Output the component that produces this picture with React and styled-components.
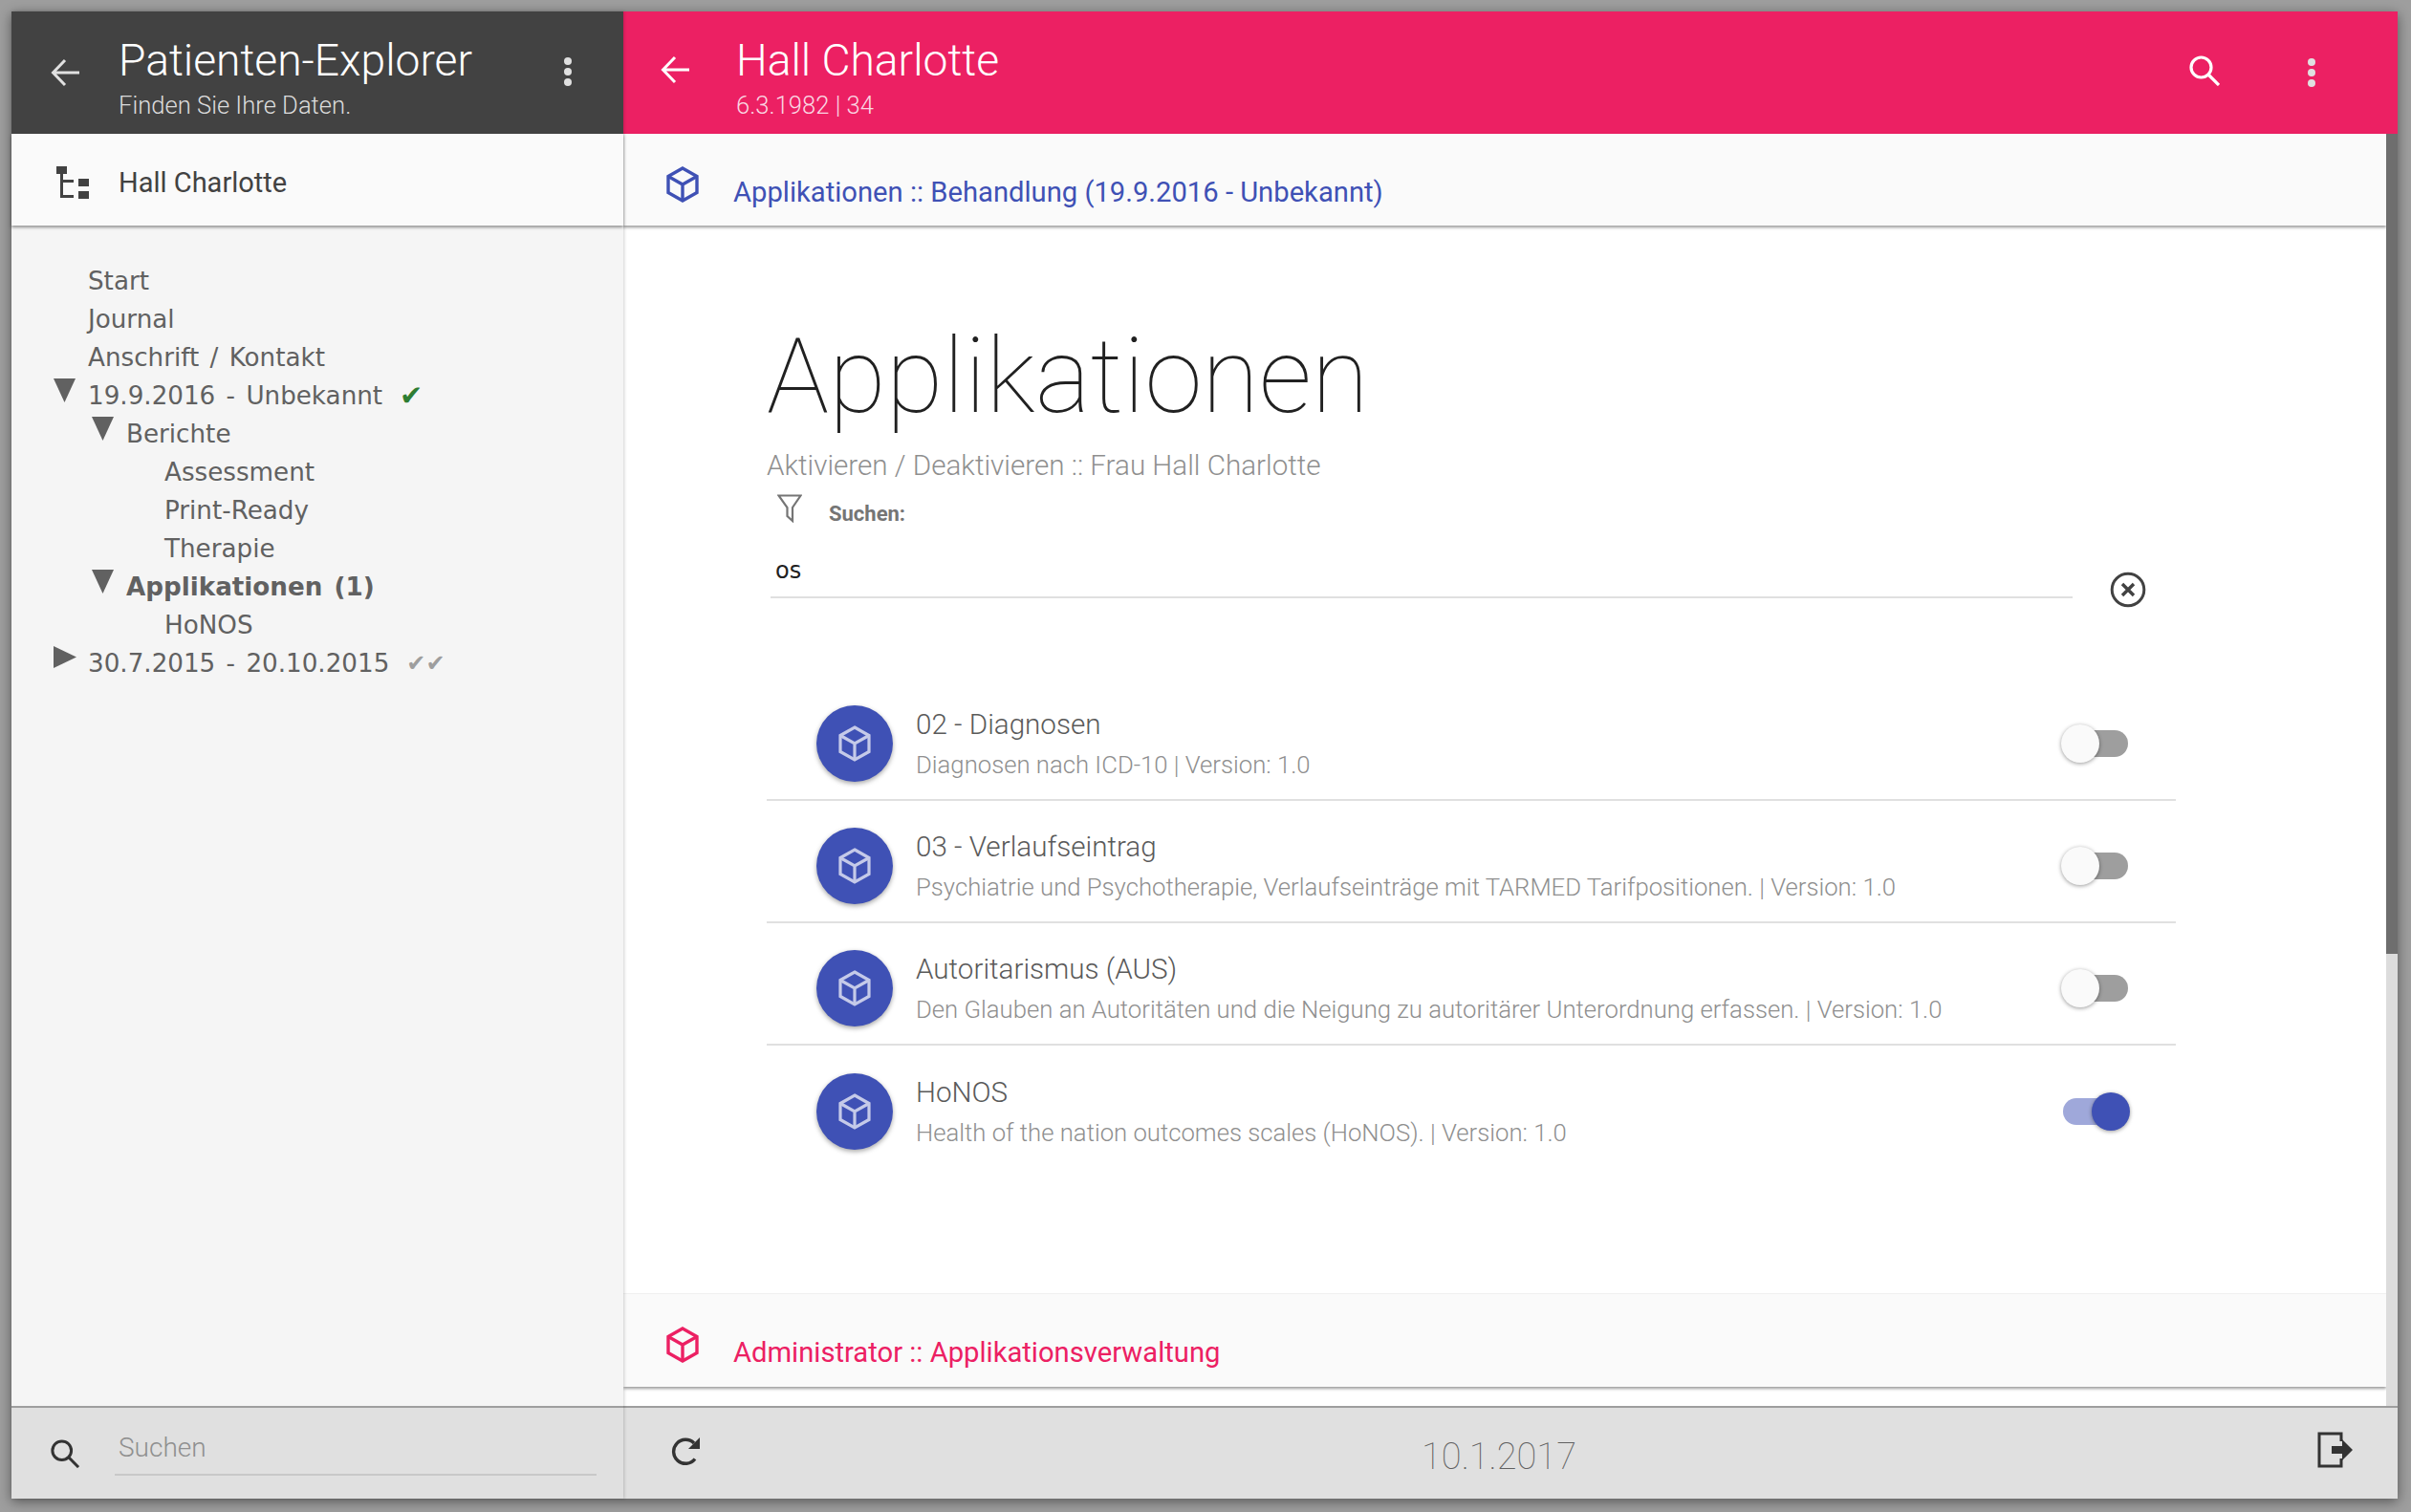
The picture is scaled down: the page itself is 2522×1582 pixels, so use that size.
import styled, { createGlobalStyle } from "styled-components";

const GlobalStyle = createGlobalStyle`
    html, body {
        margin: 0;
        padding: 0;
        height: 100%;
        background: #9e9e9e;
        overflow: hidden;
    }
    * {
        box-sizing: border-box;
    }
`;

const SANS = `"Roboto", "Liberation Sans", sans-serif`;
const TREE = `"DejaVu Sans", sans-serif`;

const treeRows = [
    { level: 0, label: "Start" },
    { level: 0, label: "Journal" },
    { level: 0, label: "Anschrift / Kontakt" },
    { level: 0, label: "19.9.2016 - Unbekannt", arrow: "down", check: "single" },
    { level: 1, label: "Berichte", arrow: "down" },
    { level: 2, label: "Assessment" },
    { level: 2, label: "Print-Ready" },
    { level: 2, label: "Therapie" },
    { level: 1, label: "Applikationen (1)", arrow: "down", bold: true },
    { level: 2, label: "HoNOS" },
    { level: 0, label: "30.7.2015 - 20.10.2015", arrow: "right", check: "double" },
];

const apps = [
    { title: "02 - Diagnosen", text: "Diagnosen nach ICD-10 | Version: 1.0", active: false },
    {
        title: "03 - Verlaufseintrag",
        text: "Psychiatrie und Psychotherapie, Verlaufseinträge mit TARMED Tarifpositionen. | Version: 1.0",
        active: false,
    },
    {
        title: "Autoritarismus (AUS)",
        text: "Den Glauben an Autoritäten und die Neigung zu autoritärer Unterordnung erfassen. | Version: 1.0",
        active: false,
    },
    { title: "HoNOS", text: "Health of the nation outcomes scales (HoNOS). | Version: 1.0", active: true },
];

const BackIcon = ({ color }) => (
    <svg width="30" height="30" viewBox="0 0 30 30" fill="none" stroke={color} strokeWidth="3">
        <path d="M30 15H3M15 2 2.5 15 15 28" />
    </svg>
);

const DotsIcon = ({ color }) => (
    <svg width="10" height="30" viewBox="0 0 10 30" fill={color}>
        <circle cx="5" cy="4" r="4" />
        <circle cx="5" cy="15" r="4" />
        <circle cx="5" cy="26" r="4" />
    </svg>
);

const SearchIcon = ({ color, size = 32 }) => (
    <svg width={size} height={size} viewBox="0 0 32 32" fill="none" stroke={color} strokeWidth="3.2">
        <circle cx="12.5" cy="12.5" r="10.5" />
        <path d="M20 20 31 31" />
    </svg>
);

const CubeIcon = ({ color, stroke = 3.4 }) => (
    <svg width="34" height="38" viewBox="0 0 34 38" fill="none" stroke={color} strokeWidth={stroke}>
        <path d="M17 2 32 10.5V27.5L17 36 2 27.5V10.5Z" />
        <path d="M2 10.5 17 19 32 10.5M17 19V36" />
    </svg>
);

const TreeIcon = () => (
    <svg width="34" height="34" viewBox="0 0 34 34" fill="#424242">
        <rect x="0" y="0" width="11" height="8" />
        <rect x="4" y="8" width="3" height="25" />
        <rect x="4" y="14" width="14" height="3" />
        <rect x="4" y="30" width="14" height="3" />
        <rect x="23" y="13" width="11" height="8" />
        <rect x="23" y="26" width="11" height="8" />
    </svg>
);

const FilterIcon = () => (
    <svg width="26" height="30" viewBox="0 0 26 30" fill="none" stroke="#757575" strokeWidth="2.2">
        <path d="M1.5 1.5H24.5L16 14V28L10.5 23V14Z" />
    </svg>
);

const ClearIcon = () => (
    <svg width="38" height="38" viewBox="0 0 38 38" fill="none" stroke="#424242">
        <circle cx="19" cy="19" r="16.8" strokeWidth="3" />
        <path d="M13 13 25 25M25 13 13 25" strokeWidth="3.4" />
    </svg>
);

const RefreshIcon = () => (
    <svg width="32" height="32" viewBox="0 0 32 32" fill="none">
        <path d="M25 23.5A12.5 12.5 0 1 1 24 7" stroke="#333" strokeWidth="3.4" />
        <path d="M30 1V13H18Z" fill="#333" />
    </svg>
);

const LogoutIcon = () => (
    <svg width="38" height="38" viewBox="0 0 38 38" fill="none">
        <path d="M25 10V2H2V36H25V28" stroke="#333" strokeWidth="3" />
        <path d="M15 15H26V8L37 19 26 30V23H15Z" fill="#333" />
    </svg>
);

const Arrow = ({ dir }) =>
    dir === "down" ? (
        <svg width="23" height="25" viewBox="0 0 23 25" fill="#616161">
            <path d="M0 0H23L11.5 25Z" />
        </svg>
    ) : (
        <svg width="24" height="23" viewBox="0 0 24 23" fill="#616161">
            <path d="M0 0 24 11.5 0 23Z" />
        </svg>
    );

const Toggle = ({ on }) => (
    <ToggleTrack $on={on}>
        <ToggleThumb $on={on} />
    </ToggleTrack>
);

export default function App() {
    return (
        <>
            <GlobalStyle />
            <Page>
                <AppWindow>
                    <Sidebar>
                        <HeaderBar $bg="#424242">
                            <IconSlot>
                                <BackIcon color="#e0e0e0" />
                            </IconSlot>
                            <HeaderText>
                                <HeaderTitle>Patienten-Explorer</HeaderTitle>
                                <HeaderSub $color="#dcdcdc">Finden Sie Ihre Daten.</HeaderSub>
                            </HeaderText>
                            <IconSlot $width={116} $pad="0 0 3px">
                                <DotsIcon color="#e0e0e0" />
                            </IconSlot>
                        </HeaderBar>
                        <PatientBar>
                            <IconSlot $pad="6px 0 0 16px">
                                <TreeIcon />
                            </IconSlot>
                            <PatientName>Hall Charlotte</PatientName>
                        </PatientBar>
                        <Tree>
                            {treeRows.map((row) => (
                                <TreeRow key={row.label} $level={row.level} $bold={row.bold}>
                                    <ArrowSlot>{row.arrow && <Arrow dir={row.arrow} />}</ArrowSlot>
                                    {row.label}
                                    {row.check === "single" && (
                                        <Check $color="#2e7d32" $size={29}>
                                            ✔
                                        </Check>
                                    )}
                                    {row.check === "double" && (
                                        <Check $color="#9e9e9e" $size={24}>
                                            ✔✔
                                        </Check>
                                    )}
                                </TreeRow>
                            ))}
                        </Tree>
                        <FooterBar>
                            <IconSlot>
                                <SearchIcon color="#333" size={30} />
                            </IconSlot>
                            <SearchField>Suchen</SearchField>
                        </FooterBar>
                    </Sidebar>

                    <Main>
                        <HeaderBar $bg="#ec2063">
                            <IconSlot $width={118} $pad="0 10px 6px 0">
                                <BackIcon color="#ffffff" />
                            </IconSlot>
                            <HeaderText>
                                <HeaderTitle>Hall Charlotte</HeaderTitle>
                                <HeaderSub $color="#fad7e2">6.3.1982 | 34</HeaderSub>
                            </HeaderText>
                            <IconSlot $width={44} $pad="0 0 4px">
                                <SearchIcon color="#ffffff" />
                            </IconSlot>
                            <IconSlot $width={180}>
                                <DotsIcon color="#e0e0e0" />
                            </IconSlot>
                        </HeaderBar>
                        <MainBody>
                            <Column>
                                <SectionBar>
                                    <CubeIcon color="#3f51b5" />
                                    <SectionTitle $color="#3f51b5">
                                        Applikationen :: Behandlung (19.9.2016 - Unbekannt)
                                    </SectionTitle>
                                </SectionBar>
                                <Content>
                                    <PageTitle>Applikationen</PageTitle>
                                    <PageSub>Aktivieren / Deaktivieren :: Frau Hall Charlotte</PageSub>
                                    <FilterRow>
                                        <FilterIcon />
                                        <FilterLabel>Suchen:</FilterLabel>
                                    </FilterRow>
                                    <InputRow>
                                        <InputValue>os</InputValue>
                                        <ClearIcon />
                                    </InputRow>
                                    <AppList>
                                        {apps.map((app) => (
                                            <AppRow key={app.title}>
                                                <Avatar>
                                                    <CubeIcon color="#c5cae9" stroke={3.2} />
                                                </Avatar>
                                                <AppText>
                                                    <AppTitle>{app.title}</AppTitle>
                                                    <AppInfo>{app.text}</AppInfo>
                                                </AppText>
                                                <Toggle on={app.active} />
                                            </AppRow>
                                        ))}
                                    </AppList>
                                </Content>
                                <AdminBar>
                                    <CubeIcon color="#ec2063" />
                                    <SectionTitle $color="#ec2063">Administrator :: Applikationsverwaltung</SectionTitle>
                                </AdminBar>
                                <AdminGap />
                            </Column>
                            <Scrollbar>
                                <ScrollThumb />
                            </Scrollbar>
                        </MainBody>
                        <MainFooter>
                            <RefreshSlot>
                                <RefreshIcon />
                            </RefreshSlot>
                            <DateText>10.1.2017</DateText>
                            <LogoutSlot>
                                <LogoutIcon />
                            </LogoutSlot>
                        </MainFooter>
                    </Main>
                </AppWindow>
            </Page>
        </>
    );
}

const Page = styled.div`
    height: 100vh;
    padding: 12px 14px 14px 12px;
    background: #9e9e9e;
`;

const AppWindow = styled.div`
    display: flex;
    width: 100%;
    height: 100%;
    background: #fff;
    box-shadow: 0 3px 12px rgba(0, 0, 0, 0.45);
`;

const Sidebar = styled.div`
    position: relative;
    z-index: 2;
    display: flex;
    flex-direction: column;
    flex: 0 0 640px;
    background: #f5f5f5;
    box-shadow: 1px 0 3px rgba(0, 0, 0, 0.18);
`;

const Main = styled.div`
    display: flex;
    flex-direction: column;
    flex: 1;
    min-width: 0;
`;

const HeaderBar = styled.div`
    display: flex;
    align-items: center;
    flex: 0 0 128px;
    background: ${(p) => p.$bg};
`;

const IconSlot = styled.div`
    display: flex;
    align-items: center;
    justify-content: center;
    flex: 0 0 ${(p) => p.$width || 112}px;
    padding: ${(p) => p.$pad || 0};
`;

const HeaderText = styled.div`
    display: flex;
    flex-direction: column;
    flex: 1;
    min-width: 0;
`;

const HeaderTitle = styled.div`
    font: 300 46.2px/52px ${SANS};
    color: #fff;
    margin-top: 10px;
`;

const HeaderSub = styled.div`
    font: 300 25.6px/30px ${SANS};
    color: ${(p) => p.$color};
    margin-top: 6px;
`;

const PatientBar = styled.div`
    position: relative;
    display: flex;
    align-items: center;
    flex: 0 0 96px;
    background: #fafafa;
    box-shadow: 0 2px 3px rgba(0, 0, 0, 0.4);
`;

const PatientName = styled.div`
    margin-top: 6px;
    font: 400 29px/34px ${SANS};
    color: #424242;
`;

const Tree = styled.div`
    flex: 1;
    padding-top: 38px;
`;

const TreeRow = styled.div`
    display: flex;
    align-items: center;
    height: 40px;
    padding-left: ${(p) => 44 + p.$level * 40}px;
    font: ${(p) => (p.$bold ? 700 : 400)} 26.2px/40px ${TREE};
    word-spacing: 3px;
    color: #616161;
    white-space: pre;
`;

const ArrowSlot = styled.div`
    display: flex;
    align-self: flex-start;
    flex: 0 0 36px;
    padding-top: 2px;
`;

const Check = styled.span`
    margin-left: 18px;
    font-size: ${(p) => p.$size}px;
    font-style: italic;
    color: ${(p) => p.$color};
`;

const FooterBar = styled.div`
    display: flex;
    align-items: center;
    flex: 0 0 97px;
    background: #e0e0e0;
    border-top: 2px solid #9e9e9e;
`;

const SearchField = styled.div`
    width: 504px;
    margin-left: -4px;
    padding: 0 0 10px 4px;
    border-bottom: 2px solid #c8c8c8;
    font: 300 28px/34px ${SANS};
    color: #8f8f8f;
`;

const MainBody = styled.div`
    display: flex;
    flex: 1;
    min-height: 0;
`;

const Column = styled.div`
    display: flex;
    flex-direction: column;
    flex: 1;
    min-width: 0;
`;

const SectionBar = styled.div`
    display: flex;
    align-items: center;
    flex: 0 0 96px;
    padding-left: 45px;
    background: #fafafa;
    box-shadow: 0 2px 3px rgba(0, 0, 0, 0.4);
    & > svg {
        margin-top: 10px;
    }
`;

const AdminBar = styled(SectionBar)`
    flex-basis: 97px;
    box-shadow: 0 -1px 0 #f0f0f0, 0 2px 3px rgba(0, 0, 0, 0.4);
    & > svg {
        margin-top: 8px;
    }
`;

const AdminGap = styled.div`
    flex: 0 0 20px;
`;

const SectionTitle = styled.div`
    margin: 25px 0 0 36px;
    font: 400 29.2px/34px ${SANS};
    color: ${(p) => p.$color};
`;

const Content = styled.div`
    display: flex;
    flex-direction: column;
    flex: 1;
    min-height: 0;
    padding: 95px 220px 0 150px;
`;

const PageTitle = styled.div`
    font: 100 109px/126px ${SANS};
    color: #212121;
`;

const PageSub = styled.div`
    margin-top: 12px;
    font: 300 29.6px/36px ${SANS};
    color: #8f8f8f;
`;

const FilterRow = styled.div`
    display: flex;
    align-items: flex-start;
    gap: 28px;
    margin-top: 12px;
    padding-left: 11px;
`;

const FilterLabel = styled.div`
    margin-top: 6px;
    font: 700 22px/30px ${SANS};
    color: #757575;
`;

const InputRow = styled.div`
    display: flex;
    align-items: flex-end;
    gap: 39px;
    margin-top: 27px;
    padding: 0 31px 0 4px;
    & > svg {
        margin-bottom: -10px;
    }
`;

const InputValue = styled.div`
    flex: 1;
    padding: 0 0 10px 5px;
    border-bottom: 2px solid #e0e0e0;
    font: 400 24px/34px ${TREE};
    color: #212121;
`;

const AppList = styled.div`
    display: flex;
    flex-direction: column;
    margin-top: 84px;
`;

const AppRow = styled.div`
    display: flex;
    align-items: center;
    height: 128px;
    padding: 10px 50px 0 52px;
    border-bottom: 2px solid #e0e0e0;
    &:last-child {
        border-bottom: none;
    }
`;

const Avatar = styled.div`
    display: flex;
    align-items: center;
    justify-content: center;
    flex: 0 0 80px;
    height: 80px;
    border-radius: 50%;
    background: #3f51b5;
    box-shadow: 0 2px 5px rgba(0, 0, 0, 0.35);
`;

const AppText = styled.div`
    flex: 1;
    min-width: 0;
    margin: -2px 0 0 24px;
`;

const AppTitle = styled.div`
    font: 300 29.6px/38px ${SANS};
    color: #5a5a5a;
`;

const AppInfo = styled.div`
    margin-top: 7px;
    font: 300 25.7px/32px ${SANS};
    color: #8f8f8f;
`;

const ToggleTrack = styled.div`
    position: relative;
    flex: 0 0 68px;
    height: 28px;
    border-radius: 14px;
    background: ${(p) => (p.$on ? "#9fa8da" : "#9e9e9e")};
`;

const ToggleThumb = styled.div`
    position: absolute;
    top: -6px;
    left: ${(p) => (p.$on ? "30px" : "-2px")};
    width: 40px;
    height: 40px;
    border-radius: 50%;
    background: ${(p) => (p.$on ? "#3f51b5" : "#fafafa")};
    box-shadow: 0 1px 4px rgba(0, 0, 0, 0.4);
`;

const Scrollbar = styled.div`
    display: flex;
    flex: 0 0 12px;
    background: #dcdcdc;
`;

const ScrollThumb = styled.div`
    flex: 1;
    height: 858px;
    background: #6e6e6e;
`;

const MainFooter = styled.div`
    display: flex;
    align-items: center;
    flex: 0 0 97px;
    background: #e0e0e0;
    border-top: 2px solid #9e9e9e;
`;

const RefreshSlot = styled.div`
    display: flex;
    flex: 0 0 auto;
    margin: -4px 0 0 50px;
`;

const DateText = styled.div`
    flex: 1;
    text-align: center;
    margin: 6px 0 0 -22px;
    font: 100 38px/44px ${SANS};
    color: #616161;
`;

const LogoutSlot = styled.div`
    display: flex;
    margin: -8px 46px 0 0;
`;
